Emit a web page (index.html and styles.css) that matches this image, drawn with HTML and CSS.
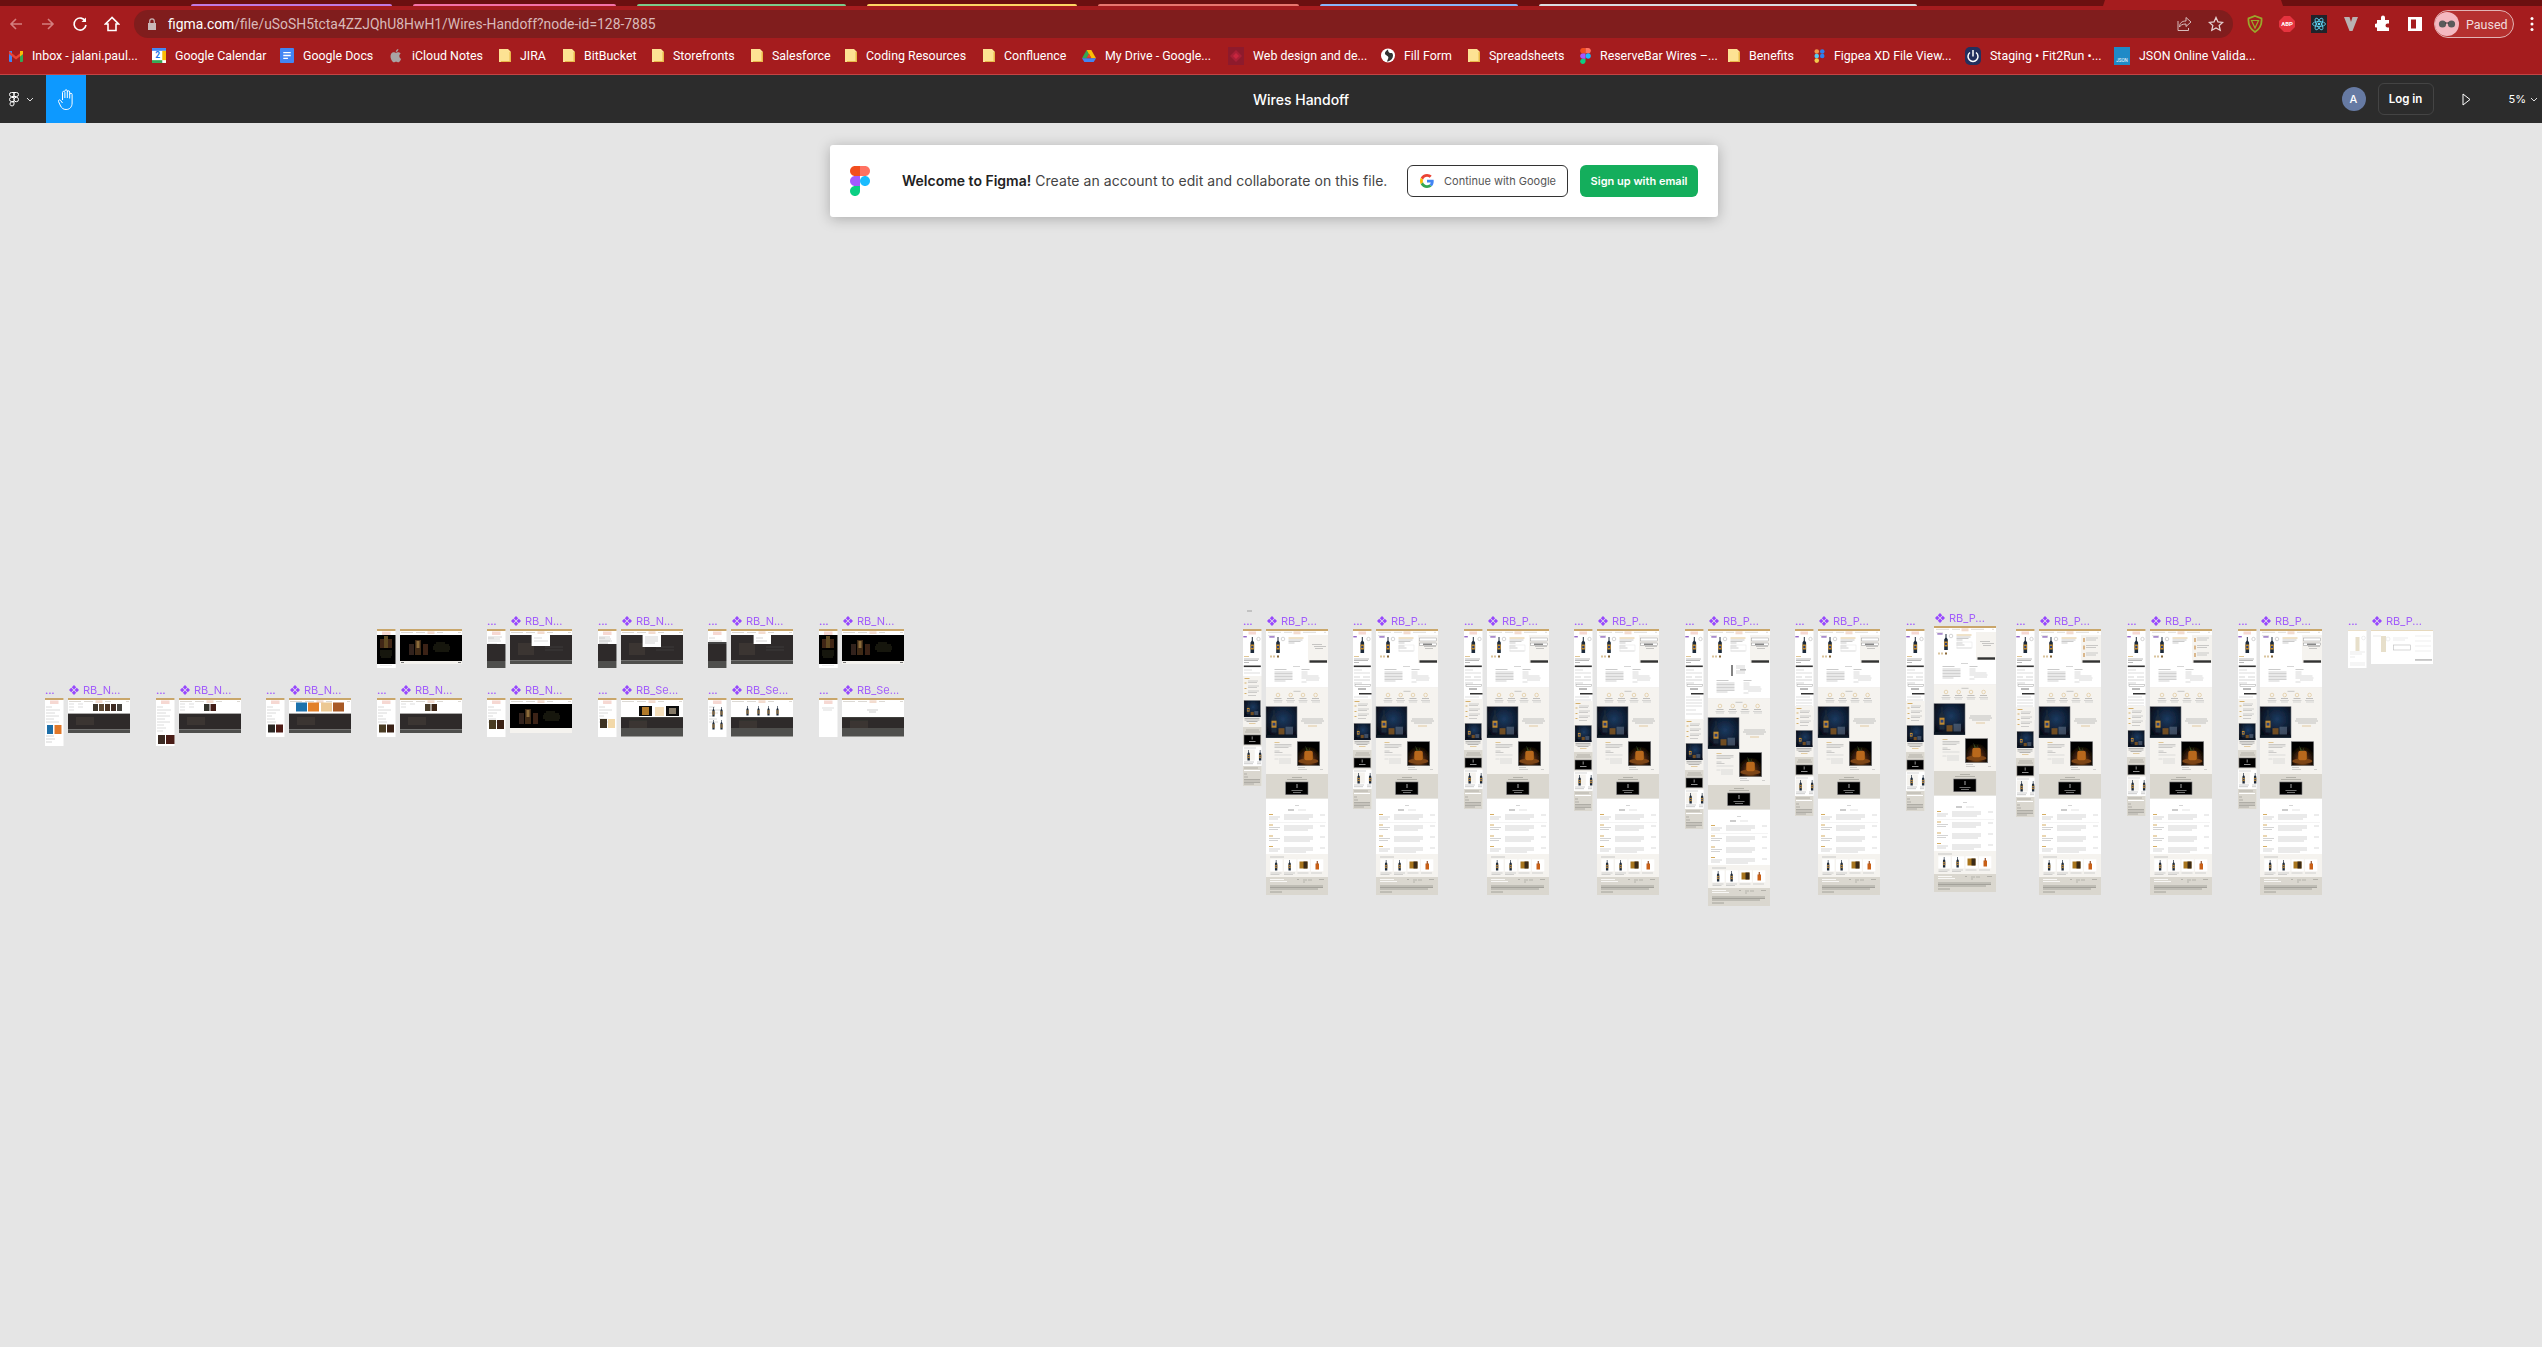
FILE: index.html
```html
<!DOCTYPE html>
<html lang="en">

<head>
    <meta charset="UTF-8">
    <meta name="viewport" content="width=device-width, initial-scale=1.0">
    <title>Wires Handoff - Figma</title>
    <link rel="stylesheet" href="styles.css">
</head>

<body>
    <!-- shared bits for the browser bar -->
    <svg class="sprites" width="0" height="0">
        <defs>
            <g id="folder">
                <path d="M0 0h9l3 3v10H0z" fill="#fde293" />
                <path d="M10.500 3H12v10H2v-1h8.500z" fill="#e9b949" />
            </g>
            <g id="figmaColor">
                <path d="M50 300c27.600 0 50-22.400 50-50v-50H50c-27.600 0-50 22.400-50 50s22.400 50 50 50z" fill="#0acf83" />
                <path d="M0 150c0-27.600 22.400-50 50-50h50v100H50c-27.600 0-50-22.400-50-50z" fill="#a259ff" />
                <path d="M0 50C0 22.400 22.400 0 50 0h50v100H50C22.400 100 0 77.600 0 50z" fill="#f24e1e" />
                <path d="M100 0h50c27.600 0 50 22.400 50 50s-22.400 50-50 50h-50V0z" fill="#ff7262" />
                <path d="M200 150c0 27.600-22.400 50-50 50s-50-22.400-50-50 22.400-50 50-50 50 22.400 50 50z" fill="#1abcfe" />
            </g>
        </defs>
    </svg>

    <div class="tabstrip">
        <span class="tabline t-purple"></span>
        <span class="tabline t-pink"></span>
        <span class="tabline t-green"></span>
        <span class="tabline t-yellow"></span>
        <span class="tabline t-salmon"></span>
        <span class="tabline t-blue"></span>
        <span class="tabline t-grey"></span>
        <span class="active-tab"></span>
    </div>

    <div class="toolbar">
        <div class="nav-btns">
            <svg class="nav-icon" viewBox="0 0 16 16"><path d="M14 8H3M8 3 3 8l5 5" class="dim-stroke" /></svg>
            <svg class="nav-icon" viewBox="0 0 16 16"><path d="M2 8h11M8 3l5 5-5 5" class="dim-stroke" /></svg>
            <svg class="nav-icon" viewBox="0 0 16 16"><path d="M13.500 5.500A6 6 0 1 0 14 9" class="white-stroke" /><path d="M14 1.500V6H9.500z" fill="#fff" /></svg>
            <svg class="nav-icon" viewBox="0 0 16 16"><path d="M8 1.500 1.500 8H4v6.500h8V8h2.500z" class="white-stroke" /></svg>
        </div>
        <div class="omnibox">
            <svg class="lock" viewBox="0 0 10 12"><path d="M1 5h8v7H1z" fill="#c9b7b7" /><path d="M2.700 5V3.200a2.300 2.300 0 0 1 4.600 0V5" fill="none" stroke="#c9b7b7" stroke-width="1.200" /></svg>
            <div class="url"><span class="host">figma.com</span>/file/uSoSH5tcta4ZZJQhU8HwH1/Wires-Handoff?node-id=128-7885</div>
            <svg class="omni-icon" viewBox="0 0 16 16"><path d="M10 1.500 15 6l-5 4.500V8C6.500 8 4.500 9 3.500 11c0-4 2.500-6 6.500-6zM2 5v9.500h10.500V12" fill="none" stroke="#d8bcbc" stroke-width="1" /></svg>
            <svg class="omni-icon" viewBox="0 0 16 16"><path d="m8 1.500 2 4.400 4.700.5-3.500 3.200 1 4.700L8 11.900l-4.200 2.400 1-4.700L1.300 6.400 6 5.900z" fill="none" stroke="#e4d2d2" stroke-width="1.300" /></svg>
        </div>
        <div class="extensions">
            <svg class="ext" viewBox="0 0 16 18"><path d="M8 1 14.500 3.500C15 9 13 14 8 17 3 14 1 9 1.500 3.500z" fill="none" stroke="#9aa82c" stroke-width="1.800" /><path d="M4.500 5.500h7L8 13z" fill="none" stroke="#9aa82c" stroke-width="1.200" /></svg>
            <svg class="ext" viewBox="0 0 16 18"><path d="M5 1h6l5 5v6l-5 5H5l-5-5V6z" fill="#e6333f" /><text x="8" y="11.200" class="abp">ABP</text></svg>
            <svg class="ext" viewBox="0 0 16 18"><path d="M0 0h16v18H0z" fill="#20232a" /><g fill="none" stroke="#61dafb" stroke-width=".8"><ellipse cx="8" cy="9" rx="6.500" ry="2.500" /><ellipse cx="8" cy="9" rx="6.500" ry="2.500" transform="rotate(60 8 9)" /><ellipse cx="8" cy="9" rx="6.500" ry="2.500" transform="rotate(120 8 9)" /></g><circle cx="8" cy="9" r="1.300" fill="#61dafb" /></svg>
            <svg class="ext" viewBox="0 0 16 16"><path d="M1 1h5.500L8 6l1.500-5H15L9.500 15h-3z" fill="#b9b2b2" /></svg>
            <svg class="ext" viewBox="0 0 16 16"><path d="M6 1.500a2 2 0 0 1 4 0V4h4v3.500h-1.500a2 2 0 0 0 0 4H14V15H2v-3.500h-.5a2 2 0 0 1 0-4H2V4h4z" fill="#fff" /></svg>
            <svg class="ext" viewBox="0 0 16 16"><path d="M1 1h14v14H1z" fill="#fff" /><path d="M4 3.500h5v9H4z" fill="#a51c1e" /></svg>
            <div class="profile">
                <svg class="avatar" viewBox="0 0 24 24">
                    <circle cx="12" cy="12" r="12" fill="#f4b8c0" />
                    <circle cx="7.500" cy="12" r="3.600" fill="#5b5b5b" />
                    <circle cx="16.500" cy="12" r="3.600" fill="#5b5b5b" />
                    <path d="M10 11h4" stroke="#333" />
                </svg>
                <span class="paused">Paused</span>
            </div>
            <svg class="kebab" viewBox="0 0 4 16"><circle cx="2" cy="2.500" r="1.500" /><circle cx="2" cy="8" r="1.500" /><circle cx="2" cy="13.500" r="1.500" /></svg>
        </div>
    </div>

    <div class="bookmarks">
        <a class="bm w-inbox"><svg class="bm-icon" viewBox="0 0 14 13"><path d="M0 2h3v11H1a1 1 0 0 1-1-1z" fill="#4285f4" /><path d="M11 2h3v10a1 1 0 0 1-1 1h-2z" fill="#34a853" /><path d="M0 2 7 7.500 14 2v3L7 10.500 0 5z" fill="#ea4335" /><path d="M11 2h3v3l-3 2.400z" fill="#fbbc05" /></svg>Inbox - jalani.paul...</a>
        <a class="bm w-cal"><svg class="bm-icon" viewBox="0 0 15 16"><path d="M0 0h15v16H0z" fill="#fff" /><path d="M0 0h15v3H0z" fill="#4285f4" /><path d="M0 13h11v3H0z" fill="#34a853" /><path d="M11 3h4v10h-4z" fill="#fbbc05" /><text x="6" y="11" class="cal-num">2</text></svg>Google Calendar</a>
        <a class="bm w-docs"><svg class="bm-icon" viewBox="0 0 15 16"><path d="M1 0h13a1 1 0 0 1 1 1v14a1 1 0 0 1-1 1H1a1 1 0 0 1-1-1V1a1 1 0 0 1 1-1z" fill="#4285f4" /><path d="M3.500 5h8M3.500 8h8M3.500 11h5" stroke="#fff" stroke-width="1.400" /></svg>Google Docs</a>
        <a class="bm w-icloud"><svg class="bm-icon" viewBox="0 0 14 16"><path d="M10.500 8.500c0-1.700 1.300-2.500 1.500-2.600-.8-1.200-2.100-1.400-2.500-1.400-1-.1-2 .6-2.600.6-.5 0-1.400-.6-2.300-.6C3.400 4.500 2.300 5.200 1.700 6.300.500 8.500 1.400 11.800 2.600 13.500c.6.800 1.300 1.800 2.200 1.700.9 0 1.200-.6 2.300-.6s1.400.6 2.300.6 1.600-.8 2.100-1.700c.7-1 1-1.900 1-2-.1 0-2-.7-2-3zM8.800 3.200c.5-.6.800-1.400.7-2.200-.7 0-1.500.5-2 1.100-.4.500-.8 1.300-.7 2.100.8 0 1.500-.4 2-1z" fill="#a9a4a4" /></svg>iCloud Notes</a>
        <a class="bm w-jira"><svg class="bm-icon fold" viewBox="0 0 12 13"><use href="#folder" /></svg>JIRA</a>
        <a class="bm w-bit"><svg class="bm-icon fold" viewBox="0 0 12 13"><use href="#folder" /></svg>BitBucket</a>
        <a class="bm w-store"><svg class="bm-icon fold" viewBox="0 0 12 13"><use href="#folder" /></svg>Storefronts</a>
        <a class="bm w-sales"><svg class="bm-icon fold" viewBox="0 0 12 13"><use href="#folder" /></svg>Salesforce</a>
        <a class="bm w-coding"><svg class="bm-icon fold" viewBox="0 0 12 13"><use href="#folder" /></svg>Coding Resources</a>
        <a class="bm w-conf"><svg class="bm-icon fold" viewBox="0 0 12 13"><use href="#folder" /></svg>Confluence</a>
        <a class="bm w-drive"><svg class="bm-icon" viewBox="0 0 15 14"><path d="M5 0h5L5 9H0z" fill="#34a853" transform="translate(0 1)" /><path d="M5 0h5l5 9h-5z" fill="#fbbc05" transform="translate(0 1)" /><path d="M0 10h15l-2.500 4h-10z" fill="#4285f4" /><path d="M7.500 5 10 9.500H5z" fill="#ea4335" /></svg>My Drive - Google...</a>
        <a class="bm w-web"><svg class="bm-icon tall" viewBox="0 0 16 18"><path d="M0 0h16v18H0z" fill="#8e1a2c" /><path d="M8 3l6 6-6 6-6-6z" fill="#a81f36" /><path d="M8 6l3 3-3 3-3-3z" fill="#c8263f" /></svg>Web design and de...</a>
        <a class="bm w-fill"><svg class="bm-icon" viewBox="0 0 14 14"><circle cx="7" cy="7" r="7" fill="#fff" /><path d="M7 1C4 3 3 5 5 6.500S8 8 7 10.500 5.500 13 7 13c3-1 5-3 5-6 0-1-.5-2-1-2.500C9 5 7 4 7 1z" fill="#333" /></svg>Fill Form</a>
        <a class="bm w-sheets"><svg class="bm-icon fold" viewBox="0 0 12 13"><use href="#folder" /></svg>Spreadsheets</a>
        <a class="bm w-rb"><svg class="bm-icon narrow" viewBox="0 0 200 300"><use href="#figmaColor" /></svg>ReserveBar Wires –...</a>
        <a class="bm w-ben"><svg class="bm-icon fold" viewBox="0 0 12 13"><use href="#folder" /></svg>Benefits</a>
        <a class="bm w-figpea"><svg class="bm-icon narrow" viewBox="0 0 12 16"><circle cx="3" cy="3" r="2.500" fill="#f2994a" /><circle cx="9" cy="3" r="2.500" fill="#2f80ed" /><circle cx="3" cy="8" r="2.500" fill="#56ccf2" /><circle cx="9" cy="8" r="2.500" fill="#2f80ed" /><circle cx="3" cy="13" r="2.500" fill="#f2c94c" /></svg>Figpea XD File View...</a>
        <a class="bm w-staging"><svg class="bm-icon tall" viewBox="0 0 16 18"><rect width="16" height="18" rx="5" fill="#23305e" /><path d="M5 5.500a5 5 0 1 0 6 0" fill="none" stroke="#fff" stroke-width="1.500" /><path d="M8 3v6.500" stroke="#fff" stroke-width="1.500" /></svg>Staging • Fit2Run •...</a>
        <a class="bm w-json"><svg class="bm-icon tall" viewBox="0 0 16 18"><path d="M0 0h16v18H0z" fill="#1f8ac7" /><text x="8" y="15" class="json-mark">JSON</text></svg>JSON Online Valida...</a>
    </div>

    <div class="figma-bar">
        <div class="bar-left">
            <svg class="menu-logo" viewBox="0 0 200 300" fill="none" stroke="#fff" stroke-width="20">
                <path d="M100 10H50a40 40 0 0 0 0 80h50zM100 10h50a40 40 0 0 1 0 80h-50zM100 110H50a40 40 0 0 0 0 80h50zM100 200H50a40 40 0 1 0 50 40zM190 150a40 40 0 1 1-90 0 40 40 0 0 1 90 0z" />
            </svg>
            <svg class="chev" viewBox="0 0 8 5"><path d="M1 1l3 3 3-3" /></svg>
            <div class="hand-btn">
                <svg class="hand" viewBox="0 0 18 21"><path d="M5.500 11V3.500a1.200 1.200 0 0 1 2.400 0V9m0-7a1.200 1.200 0 0 1 2.400 0v7m0-6a1.200 1.200 0 0 1 2.400 0v6.500m0-4a1.200 1.200 0 0 1 2.400 0V14c0 4-2.500 6.500-6 6.500-3 0-4.300-1.500-5.500-3.500L1.500 12.500c-.6-1.200 1.100-2.300 2-1.200L5.500 14" /></svg>
            </div>
        </div>
        <div class="doc-title">Wires Handoff</div>
        <div class="bar-right">
            <div class="user-dot">A</div>
            <div class="login-btn">Log in</div>
            <svg class="play" viewBox="0 0 9 13"><path d="M1 1l7 5.500L1 12z" /></svg>
            <div class="zoom-level">5%</div>
            <svg class="chev" viewBox="0 0 8 5"><path d="M1 1l3 3 3-3" /></svg>
        </div>
    </div>

    <div class="canvas">
        <!-- the file's frames, at 5% zoom, in page coordinates -->
        <svg class="board" viewBox="0 123 2542 1224" width="2542" height="1224">
            <defs>
                <filter id="soft" x="-5%" y="-5%" width="110%" height="110%">
                    <feGaussianBlur stdDeviation=".3" />
                </filter>
                <filter id="softer" x="-5%" y="-5%" width="110%" height="110%">
                    <feGaussianBlur stdDeviation=".2" />
                </filter>
                <radialGradient id="navyGlow" cx="55%" cy="40%" r="65%">
                    <stop offset="0" stop-color="#1c3a60" />
                    <stop offset="1" stop-color="#050b16" />
                </radialGradient>
                <radialGradient id="amberGlow" cx="50%" cy="75%" r="55%">
                    <stop offset="0" stop-color="#a9601a" />
                    <stop offset=".55" stop-color="#3d200b" />
                    <stop offset="1" stop-color="#050302" />
                </radialGradient>

                <path id="comp" d="M5 0l2.200 2.200L5 4.400 2.800 2.200zM2.200 2.800l2.200 2.200-2.200 2.200L0 5zM7.800 2.800 10 5 7.800 7.200 5.600 5zM5 5.600l2.200 2.200L5 10 2.800 7.800z" fill="#9747ff" />

                <g id="bottle">
                    <path d="M2 0h1v3.500l1.300 2V16H.7V5.500L2 3.500z" fill="#1d2a3a" />
                    <path d="M.7 7.500h3.600v5H.7z" fill="#c08a30" />
                    <path d="M1.500 9h2v2h-2z" fill="#2b3f78" />
                </g>
                <g id="navyShot">
                    <rect width="31" height="31" fill="url(#navyGlow)" stroke="#77787c" stroke-width=".6" />
                    <use href="#bottle" transform="translate(4.500 3.500) scale(1.400)" />
                    <path d="M12.500 21.500h6v6.500h-6z" fill="#8a5a20" opacity=".8" />
                    <path d="M19.500 20h7.500v8h-7.500z" fill="#7f8fa3" opacity=".45" />
                    <path d="M0 28h31v3H0z" fill="#0a1524" />
                </g>
                <g id="amberShot">
                    <rect width="22.400" height="24" fill="url(#amberGlow)" stroke="#77787c" stroke-width=".6" />
                    <ellipse cx="11" cy="19.500" rx="10" ry="2.600" fill="#7d4516" />
                    <rect x="7" y="9" width="8.500" height="9.500" rx="2" fill="#b8681c" />
                    <path d="M8 4l3 5 2-4-1 4H9z" fill="#34491f" />
                </g>

                <!-- product page, desktop -->
                <g id="deskHead">
                    <rect width="62" height="37" fill="#fff" />
                    <rect width="62" height="2" fill="#c9a66b" />
                    <path d="M2 3.300h13M18 3.300h8M37 3.300h13M58 3.300h2" stroke="#bdb8ae" stroke-width=".5" />
                    <rect x="27.500" y="2.300" width="7" height="3" fill="#f3dccf" />
                    <path d="M2 6.600h7" stroke="#c8c8c8" stroke-width=".5" />
                    <rect x="3.300" y="7.500" width="5.300" height=".9" fill="#54199c" />
                    <use href="#bottle" x="9.500" y="8" />
                    <circle cx="17" cy="10" r="1.800" fill="none" stroke="#aaa" stroke-width=".5" />
                    <path d="M22.500 9h15" stroke="#d8b878" stroke-width=".8" />
                    <path d="M22.500 11h14M22.500 12.500h12M22.500 14h6" stroke="#8a8a8a" stroke-width=".45" />
                    <path d="M5 26.500v2M8 26.500v2" stroke="#b58a3c" stroke-width="1" />
                    <path d="M11 27.500h2" stroke="#8a6a3a" stroke-width="2" />
                    <rect x="42" y="6" width="20" height="28" fill="#f5f3ef" />
                    <path d="M46 15.500h10M48 17.500h12M49 19.500h8" stroke="#8c8c8c" stroke-width=".45" />
                    <rect x="43.500" y="31.300" width="17.500" height="2.400" fill="#333" />
                </g>
                <g id="deskBody">
                    <rect y="37" width="62" height="21.400" fill="#fff" />
                    <path d="M27 37.500h7" stroke="#aaa" stroke-width=".5" />
                    <path d="M8.500 40.500h12M35.500 40.500h8" stroke="#888" stroke-width=".45" />
                    <path d="M8.500 43h18M8.500 44.500h18M8.500 46h18M8.500 47.500h18M8.500 49h18M8.500 50.500h18M8.500 52h11" stroke="#a3a3a3" stroke-width=".5" />
                    <path d="M35.500 43h6M35.500 45h6M35.500 47h17M35.500 49h18M40 51h13M35.500 53h5" stroke="#b0b0b0" stroke-width=".5" />
                    <rect y="58.300" width="62" height="86.800" fill="#f5f3ef" />
                    <path d="M27.500 62.300h7" stroke="#999" stroke-width=".5" />
                    <g fill="none" stroke="#dcc08c" stroke-width=".6">
                        <circle cx="12" cy="66" r="1.800" />
                        <circle cx="24.700" cy="66" r="1.800" />
                        <circle cx="37" cy="66" r="1.800" />
                        <circle cx="49.600" cy="66" r="1.800" />
                    </g>
                    <path d="M8.500 69.500h7M21 69.500h7M33.500 69.500h7M46 69.500h7" stroke="#888" stroke-width=".5" />
                    <path d="M7.500 71.500h9M20 71.500h9M32.500 71.500h9M45 71.500h9M8 73h8M21 73h7M33 73h8M46 73h8" stroke="#b4b4b4" stroke-width=".5" />
                    <use href="#navyShot" y="77.700" />
                    <path d="M36 90h21M35 92h23M38 94h18" stroke="#8f8f8f" stroke-width=".5" />
                    <path d="M42 97h9" stroke="#d5b06c" stroke-width=".6" />
                    <path d="M8.500 113.500h5" stroke="#d5b06c" stroke-width=".7" />
                    <path d="M8.500 115.500h17M8.500 117h17M8.500 118.500h14M8.500 122h5M8.500 123.500h8" stroke="#a3a3a3" stroke-width=".5" />
                    <path d="M8.500 126h17M8.500 130h4M13 130h12M13 132h12M13 134h12" stroke="#c0c0c0" stroke-width=".5" />
                    <use href="#amberShot" x="31.300" y="112.700" />
                    <path d="M32 138.500h7M32 140.500h9M54 140.500h3" stroke="#aaa" stroke-width=".5" />
                    <rect y="145" width="62" height="24.500" fill="#dad7cf" />
                    <path d="M26 148.500h10M21 150.500h20" stroke="#8c8a82" stroke-width=".5" />
                    <rect x="19.700" y="153" width="22.300" height="12.700" fill="#050505" stroke="#77767a" stroke-width=".6" />
                    <path d="M31 155v4" stroke="#c8c8c8" stroke-width=".8" />
                    <path d="M25.500 161.500h11M27 163.500h8" stroke="#d8d8d8" stroke-width=".5" />
                    <rect y="169.800" width="62" height="55.200" fill="#fff" />
                    <path d="M29 176.500h4" stroke="#aaa" stroke-width=".5" />
                    <path d="M22 181h6" stroke="#555" stroke-width=".6" />
                    <path d="M32 181h8" stroke="#ccc" stroke-width=".6" />
                    <path d="M3 185.500h4M3 196h4M3 207h4M3 217.500h4" stroke="#d5ad62" stroke-width="1" />
                    <path d="M3 188h11M3 190h9M3 198.500h11M3 200.500h9M3 209.500h11M3 211.500h9M3 220h11M3 222h9" stroke="#a8a8a8" stroke-width=".5" />
                    <path d="M18 186h29M18 188h29M18 190h25M18 197h29M18 199h29M18 201h24M18 208h29M18 210h29M18 212h26M18 219h29M18 221h29M18 223h22" stroke="#a8a8a8" stroke-width=".5" />
                    <path d="M54 186h5M54 197h5M54 208h5M54 219h5" stroke="#b0b0b0" stroke-width=".5" />
                    <path d="M3 193.500h57" stroke="#e9e9e9" stroke-width=".5" />
                    <rect y="225" width="62" height="23" fill="#f5f3ef" />
                    <path d="M4 228h14" stroke="#999" stroke-width=".5" />
                    <rect x="4.300" y="230.300" width="12.300" height="12" fill="#fff" />
                    <rect x="18" y="230.300" width="12.300" height="12" fill="#fff" />
                    <rect x="31.500" y="230.300" width="12.300" height="12" fill="#fff" />
                    <rect x="45" y="230.300" width="12.300" height="12" fill="#fff" />
                    <use href="#bottle" transform="translate(8.500 231) scale(.65)" />
                    <use href="#bottle" transform="translate(22 231) scale(.65)" />
                    <path d="M33.500 232.500h8v7h-8z" fill="#a9751e" />
                    <path d="M37.500 232.500h4v7h-4z" fill="#3a2a14" />
                    <path d="M49.500 234.500h3.500v6h-3.500z" fill="#c85f17" />
                    <path d="M50.700 232h1.100v3h-1.100z" fill="#8a3d10" />
                    <path d="M4.500 244h11M4.500 245.500h9M18 244h11M18 245.500h9M31.500 244h11M45 244h11" stroke="#aaa" stroke-width=".5" />
                    <rect y="248" width="62" height="18" fill="#dad7cf" />
                    <path d="M4 250.500h14M4 252.500h17" stroke="#fff" stroke-width=".8" />
                    <path d="M31 250.500h2M37 251h4M37 253h2M42 251h4M53 250.500h5" stroke="#8f8d86" stroke-width=".5" />
                    <path d="M4 257h53M4 258.500h53M4 260h48M4 263h12" stroke="#77756f" stroke-width=".55" />
                </g>
                <g id="panelForm">
                    <rect x="43.500" y="9" width="17" height="3" fill="#fff" stroke="#888" stroke-width=".4" />
                    <rect x="43.500" y="14" width="17" height="2.500" fill="#fff" stroke="#777" stroke-width=".4" />
                    <rect x="47" y="14.500" width="9" height="1.500" fill="#888" />
                </g>
                <g id="panelRows">
                    <rect x="42" y="6" width="20" height="24" fill="#f5f3ef" />
                    <path d="M45 9v4M45 16.500v4M45 24v4" stroke="#c8904a" stroke-width="1.200" />
                    <path d="M47 9h12M47 11h10M47 16.500h12M47 18.500h10M47 24h12M47 26h10" stroke="#9c9c9c" stroke-width=".5" />
                </g>
                <g id="qtyRow">
                    <path d="M22.500 17h6M22.500 19h8" stroke="#999" stroke-width=".5" />
                    <path d="M22.500 22h15" stroke="#cfcfcf" stroke-width=".6" />
                    <rect x="23" y="16" width="15" height="6" fill="none" stroke="#ddd" stroke-width=".4" />
                </g>
                <g id="deskExtra">
                    <rect y="37" width="62" height="12" fill="#fff" />
                    <path d="M24 36v11" stroke="#666" stroke-width="1.600" />
                    <path d="M28 37h9M28 39h9M28 42h9M28 44h9" stroke="#aaa" stroke-width=".5" />
                    <rect x="32" y="40" width="6" height="1.500" fill="#bbb" />
                </g>

                <!-- product page, mobile -->
                <g id="mobHead">
                    <rect width="18.500" height="47" fill="#fff" />
                    <rect width="18.500" height="2" fill="#c9a66b" />
                    <rect x="5.500" y="2.500" width="7.500" height="3" fill="#f6d8d2" />
                    <rect x=".3" y="7.300" width="3.500" height="1" fill="#6a28b0" />
                    <use href="#bottle" x="6.800" y="8" />
                    <circle cx="15.500" cy="10" r="1.700" fill="none" stroke="#aaa" stroke-width=".5" />
                    <path d="M1 27.500h5" stroke="#d8b878" stroke-width=".8" />
                    <path d="M1 30h15M1 31.500h14M1 33.500h5" stroke="#777" stroke-width=".5" />
                    <rect x=".8" y="36.500" width="17" height="1.600" fill="#333" />
                    <path d="M1 41h8M1 44h16" stroke="#bbb" stroke-width=".5" />
                </g>
                <g id="mobExtra">
                    <rect width="18.500" height="44" fill="#fff" />
                    <path d="M1 1h6M10 1h7M1 4h16M1 7h8" stroke="#aaa" stroke-width=".5" />
                    <rect x="2" y="8.500" width="15.500" height="2" fill="#fff" stroke="#888" stroke-width=".4" />
                    <rect x="5" y="12.500" width="8" height="1" fill="#777" />
                    <rect x="6" y="17" width="12.500" height="1.500" fill="#333" />
                    <path d="M1 21h14M1 24h16M1 27h16M1 30h16M1 34h10M1 38h16" stroke="#bbb" stroke-width=".5" />
                </g>
                <g id="mobBody">
                    <rect y="47" width="18.500" height="110" fill="#f5f3ef" />
                    <path d="M1.500 49.500h5M1.500 54h2M1.500 59.500h2M1.500 64.500h2" stroke="#d5b06c" stroke-width="1" />
                    <path d="M5 52h10M5 53.500h9M5 57h11M5 58.500h9M5 62h11M5 63.500h9M5 66.500h8" stroke="#a5a5a5" stroke-width=".5" />
                    <g transform="translate(1 71.500) scale(.53)">
                        <use href="#navyShot" />
                    </g>
                    <path d="M1.500 89.500h15M1.500 91h15M3.500 92.500h11" stroke="#777" stroke-width=".5" />
                    <path d="M6 94.500h6.500" stroke="#d5b06c" stroke-width=".6" />
                    <rect y="98" width="18.500" height="18.500" fill="#dad7cf" />
                    <path d="M3 101h13M2 103h15" stroke="#8c8a82" stroke-width=".5" />
                    <rect x="1" y="106" width="16.500" height="9.500" fill="#050505" stroke="#77767a" stroke-width=".5" />
                    <path d="M9.200 107.500v3M6 112.500h6.500" stroke="#ccc" stroke-width=".7" />
                    <rect y="117.800" width="18.500" height="19" fill="#fff" />
                    <path d="M1 119h12" stroke="#aaa" stroke-width=".5" />
                    <rect x=".8" y="120.500" width="11" height="11" fill="#f5f3ef" />
                    <use href="#bottle" transform="translate(4 121) scale(.65)" />
                    <use href="#bottle" transform="translate(15.500 121) scale(.65)" />
                    <path d="M1 133h10M1 134.700h9M14 133h4M14 134.700h4" stroke="#999" stroke-width=".5" />
                    <rect y="137" width="18.500" height="20" fill="#dad7cf" />
                    <path d="M1 139h14" stroke="#8c8a82" stroke-width=".5" />
                    <path d="M1 141.500h16" stroke="#fff" stroke-width="1" />
                    <path d="M1 145h3M1 148h4M1 150.500h16M1 152h16M1 153.500h16M1 155h10" stroke="#85837c" stroke-width=".5" />
                </g>

                <!-- small variant at the far right -->
                <g id="cardDesk">
                    <rect width="62" height="34" fill="#fff" />
                    <rect width="62" height="1" fill="#e6d9bd" />
                    <rect x="10" y="6" width="5" height="16" fill="#e7dfca" />
                    <circle cx="17" cy="9" r="2" fill="none" stroke="#ddd" stroke-width=".5" />
                    <path d="M22 8h15M22 10h12M2 6h8" stroke="#ddd" stroke-width=".6" />
                    <rect x="22.500" y="15" width="17" height="5" fill="none" stroke="#bbb" stroke-width=".6" />
                    <path d="M44 6h16M44 11h16M44 16h16M44 21h16" stroke="#e4e4e4" stroke-width=".6" />
                    <rect x="44" y="29" width="17" height="1.800" fill="#c4c4c4" />
                </g>
                <g id="cardMob">
                    <rect width="18.500" height="38" fill="#fff" />
                    <rect width="18.500" height=".8" fill="#e6d9bd" />
                    <rect x="7.500" y="7" width="4" height="14" fill="#e7dfca" />
                    <circle cx="15.500" cy="8" r="1.800" fill="none" stroke="#ddd" stroke-width=".5" />
                    <path d="M2 22h15M2 24h12M2 27h5M2 33h15M2 35h15" stroke="#ddd" stroke-width=".6" />
                </g>

                <!-- nav and search frames -->
                <g id="navDesk">
                    <rect width="62" height="35" fill="#fff" />
                    <rect width="62" height="2" fill="#c9a66b" />
                    <path d="M1 3.500h12M16 3.500h9M37 3.500h6M58 3.500h3" stroke="#b8b3a8" stroke-width=".5" />
                    <rect x="27.500" y="2.300" width="7" height="2.700" fill="#f3dccf" />
                </g>
                <g id="dimBelow">
                    <rect y="15.600" width="62" height="15.700" fill="#2d2c2a" />
                    <path d="M8 19h18v8H8z" fill="#3a3631" />
                    <rect y="31.300" width="62" height="3.700" fill="#50504d" />
                </g>
                <g id="dimFull">
                    <rect y="6" width="62" height="25.300" fill="#2d2c2a" />
                    <path d="M8 14h16v12H8z" fill="#3a3631" />
                    <path d="M35 18h18M35 21h18" stroke="#3f3d3a" stroke-width=".8" />
                    <rect y="31.300" width="62" height="3.700" fill="#50504d" />
                </g>
                <g id="heroBlack">
                    <rect y="6" width="62" height="26" fill="#040302" />
                    <path d="M9 15h5v11H9z" fill="#33201a" />
                    <path d="M15 11h6v15h-6z" fill="#3f2c18" />
                    <path d="M16.500 12h3v7h-3z" fill="#8c6c3a" />
                    <path d="M23 15h5v11h-5z" fill="#3a2218" />
                    <path d="M36 14h9M34 16h15M33 18h17M33 20h17M35 22h14" stroke="#5a4e3e" stroke-width=".5" />
                    <rect y="32" width="62" height="3" fill="#f5f3ef" />
                    <path d="M1 33.500h3M58 33.500h3" stroke="#777" stroke-width="1" />
                </g>
                <g id="navMob">
                    <rect width="18.500" height="39" fill="#fff" />
                    <rect width="18.500" height="2" fill="#c9a66b" />
                    <rect x="5" y="2.500" width="8.500" height="3.500" fill="#f6d8d2" />
                    <path d="M1 9h6M1 12h13M1 15h9M1 18h5M1 21h8M1 24h9" stroke="#bdbdbd" stroke-width=".55" />
                </g>
                <g id="navMobTall">
                    <rect width="18.500" height="48" fill="#fff" />
                    <rect width="18.500" height="2" fill="#c9a66b" />
                    <rect x="5" y="2.500" width="8.500" height="3.500" fill="#f6d8d2" />
                    <path d="M1 9h6M1 12h14M1 15h9M1 18h13M1 21h8M1 24h13" stroke="#bdbdbd" stroke-width=".55" />
                </g>
                <g id="navMobHero">
                    <use href="#navMob" />
                    <rect y="6" width="18.500" height="29" fill="#040302" />
                    <path d="M3 10h4v9H3zM11 10h4v9h-4z" fill="#3f2618" />
                    <path d="M7 7h4v12H7z" fill="#5f4822" />
                    <path d="M3 22h12M3 24h12M3 26h12M4 28h10" stroke="#55493a" stroke-width=".5" />
                    <rect y="35" width="18.500" height="4" fill="#fff" />
                    <path d="M3 36.500h12" stroke="#ddd" stroke-width=".6" />
                </g>
                <g id="navMobDim">
                    <use href="#navMob" />
                    <rect y="15" width="18.500" height="17" fill="#2d2c2a" />
                    <rect y="32" width="18.500" height="7" fill="#50504d" />
                </g>
            </defs>

            <!-- tiny hidden-layer marker above the first product frame -->
            <path d="M1247 611h5" stroke="#a0a0a0" stroke-width="1" />

            <!-- nav frames, top row -->
            <g transform="translate(377 629)">
                <use href="#navMobHero" filter="url(#soft)" />
                <g transform="translate(23 0)" filter="url(#soft)"><use href="#navDesk" /><use href="#heroBlack" /></g>
            </g>
            <g transform="translate(487 629)">
                <text class="dots" y="-4">...</text><use href="#comp" x="24" y="-13" /><text class="name" x="38" y="-4">RB_N...</text>
                <g filter="url(#soft)"><use href="#navMobDim" /><path d="M1 8h14M1 10h12" stroke="#aaa" stroke-width=".5" /></g>
                <g transform="translate(23 0)" filter="url(#soft)"><use href="#navDesk" /><use href="#dimFull" /><rect x="21.600" y="6" width="18.400" height="11" fill="#fff" /><path d="M24 9h8M24 12h14" stroke="#bbb" stroke-width=".5" /></g>
            </g>
            <g transform="translate(598 629)">
                <text class="dots" y="-4">...</text><use href="#comp" x="24" y="-13" /><text class="name" x="38" y="-4">RB_N...</text>
                <g filter="url(#soft)"><use href="#navMobDim" /><path d="M1 8h11M1 10h12M1 12h11M1 14h9" stroke="#aaa" stroke-width=".5" /></g>
                <g transform="translate(23 0)" filter="url(#soft)"><use href="#navDesk" /><use href="#dimFull" /><rect x="21.600" y="6" width="18.400" height="12" fill="#fff" /><path d="M24 8h13M24 10h13M24 12h13M24 14h10" stroke="#aaa" stroke-width=".5" /></g>
            </g>
            <g transform="translate(708 629)">
                <text class="dots" y="-4">...</text><use href="#comp" x="24" y="-13" /><text class="name" x="38" y="-4">RB_N...</text>
                <g filter="url(#soft)"><use href="#navMobDim" /><rect y="13" width="18.500" height="2" fill="#444" /></g>
                <g transform="translate(23 0)" filter="url(#soft)"><use href="#navDesk" /><use href="#dimFull" /><rect x="22.600" y="6" width="17.400" height="9" fill="#fff" /><path d="M25 9h7M25 12h11" stroke="#aaa" stroke-width=".5" /></g>
            </g>
            <g transform="translate(819 629)">
                <text class="dots" y="-4">...</text><use href="#comp" x="24" y="-13" /><text class="name" x="38" y="-4">RB_N...</text>
                <use href="#navMobHero" filter="url(#soft)" />
                <g transform="translate(23 0)" filter="url(#soft)"><use href="#navDesk" /><use href="#heroBlack" /></g>
            </g>

            <!-- nav frames, bottom row -->
            <g transform="translate(45 698)">
                <text class="dots" y="-4">...</text><use href="#comp" x="24" y="-13" /><text class="name" x="38" y="-4">RB_N...</text>
                <g filter="url(#soft)"><use href="#navMobTall" /><path d="M2 27h6v9H2z" fill="#1f6ea8" /><path d="M9.500 27h7v9h-7z" fill="#e0782a" /><path d="M1 38h8M1 41h9M1 44h6" stroke="#aaa" stroke-width=".5" /></g>
                <g transform="translate(23 0)" filter="url(#soft)"><use href="#navDesk" /><use href="#dimBelow" /><path d="M1 6h5M10 6h5M1 9h5M10 9h5M1 12h5" stroke="#bbb" stroke-width=".5" /><path d="M25 6h5v7h-5z" fill="#3c342c" /><path d="M31 6h5v7h-5z" fill="#5c4630" /><path d="M37 6h5v7h-5z" fill="#4a3220" /><path d="M43 6h5v7h-5z" fill="#3c2a22" /><path d="M49 6h5v7h-5z" fill="#45423e" /></g>
            </g>
            <g transform="translate(156 698)">
                <text class="dots" y="-4">...</text><use href="#comp" x="24" y="-13" /><text class="name" x="38" y="-4">RB_N...</text>
                <g filter="url(#soft)"><use href="#navMobTall" /><path d="M1 27h7M1 30h9M1 33h6" stroke="#bbb" stroke-width=".5" /><path d="M2 37h7v9H2z" fill="#3a2a20" /><path d="M10 37h8.500v9H10z" fill="#4a1c16" /></g>
                <g transform="translate(23 0)" filter="url(#soft)"><use href="#navDesk" /><use href="#dimBelow" /><path d="M1 6h5M10 6h5M1 9h5M10 9h5M1 12h5" stroke="#bbb" stroke-width=".5" /><path d="M25 6h5.500v7H25z" fill="#33302c" /><path d="M31.500 6h5.500v7h-5.500z" fill="#421a16" /></g>
            </g>
            <g transform="translate(266 698)">
                <text class="dots" y="-4">...</text><use href="#comp" x="24" y="-13" /><text class="name" x="38" y="-4">RB_N...</text>
                <g filter="url(#soft)"><use href="#navMob" /><path d="M2 26.500h7v8H2z" fill="#2b2722" /><path d="M10 26.500h7v8h-7z" fill="#501c18" /></g>
                <g transform="translate(23 0)" filter="url(#soft)"><use href="#navDesk" /><use href="#dimBelow" /><path d="M7 4.500h11v9H7z" fill="#1f72ac" /><path d="M19 4.500h11v9H19z" fill="#e2812c" /><path d="M32 4.500h11v9H32z" fill="#ecc893" /><path d="M44 4.500h11v9H44z" fill="#a85a28" /></g>
            </g>
            <g transform="translate(377 698)">
                <text class="dots" y="-4">...</text><use href="#comp" x="24" y="-13" /><text class="name" x="38" y="-4">RB_N...</text>
                <g filter="url(#soft)"><use href="#navMob" /><path d="M2 26.500h7v8H2z" fill="#4a3a24" /><path d="M10 26.500h7v8h-7z" fill="#3a2418" /></g>
                <g transform="translate(23 0)" filter="url(#soft)"><use href="#navDesk" /><use href="#dimBelow" /><path d="M1 6h5M10 6h5M1 9h5" stroke="#bbb" stroke-width=".5" /><path d="M25 6h5.500v7H25z" fill="#4a3c2a" /><path d="M31.500 6h5.500v7h-5.500z" fill="#3c2818" /></g>
            </g>
            <g transform="translate(487 698)">
                <text class="dots" y="-4">...</text><use href="#comp" x="24" y="-13" /><text class="name" x="38" y="-4">RB_N...</text>
                <g filter="url(#soft)"><use href="#navMob" /><path d="M2 22h7v9H2z" fill="#4a3a24" /><path d="M10 22h7v9h-7z" fill="#3a2418" /></g>
                <g transform="translate(23 0)" filter="url(#soft)"><use href="#navDesk" /><use href="#heroBlack" /><rect y="30" width="62" height="5" fill="#f5f3ef" /></g>
            </g>
            <g transform="translate(598 698)">
                <text class="dots" y="-4">...</text><use href="#comp" x="24" y="-13" /><text class="name" x="38" y="-4">RB_Se...</text>
                <g filter="url(#soft)"><use href="#navMob" /><path d="M2 21h7v9H2z" fill="#3c3024" /><path d="M10 21h7v9h-7z" fill="#f2d8a8" /></g>
                <g transform="translate(23 0)" filter="url(#soft)"><use href="#navDesk" /><use href="#dimBelow" transform="translate(0 3.500)" /><rect y="30" width="62" height="5" fill="#50504d" /><path d="M18 8h13v10H18z" fill="#0b0a08" /><path d="M21 9h7v8h-7z" fill="#b27a2a" /><path d="M34 9h9v9h-9z" fill="#f5dfbb" /><path d="M45 8h13v10H45z" fill="#0b0a08" /><path d="M48 10h7v6h-7z" fill="#857a68" /></g>
            </g>
            <g transform="translate(708 698)">
                <text class="dots" y="-4">...</text><use href="#comp" x="24" y="-13" /><text class="name" x="38" y="-4">RB_Se...</text>
                <g filter="url(#soft)"><use href="#navMob" /><use href="#bottle" transform="translate(4 9) scale(.6)" /><use href="#bottle" transform="translate(12 9) scale(.6)" /><use href="#bottle" transform="translate(4 22) scale(.6)" /><use href="#bottle" transform="translate(12 22) scale(.6)" /></g>
                <g transform="translate(23 0)" filter="url(#soft)"><use href="#navDesk" /><use href="#dimBelow" transform="translate(0 3.500)" /><rect y="30" width="62" height="5" fill="#50504d" /><use href="#bottle" transform="translate(15 8) scale(.6)" /><use href="#bottle" transform="translate(26 8) scale(.6)" /><use href="#bottle" transform="translate(36 8) scale(.6)" /><use href="#bottle" transform="translate(45 8) scale(.6)" /></g>
            </g>
            <g transform="translate(819 698)">
                <text class="dots" y="-4">...</text><use href="#comp" x="24" y="-13" /><text class="name" x="38" y="-4">RB_Se...</text>
                <g filter="url(#soft)"><rect width="18.500" height="39" fill="#fff" /><rect width="18.500" height="2" fill="#c9a66b" /><rect x="5" y="2.500" width="8.500" height="3.500" fill="#f6d8d2" /><path d="M3 10h12M4 12h9" stroke="#bbb" stroke-width=".5" /></g>
                <g transform="translate(23 0)" filter="url(#soft)"><use href="#navDesk" /><use href="#dimBelow" transform="translate(0 3.500)" /><rect y="30" width="62" height="5" fill="#50504d" /><path d="M25 12h11M27 14h7" stroke="#999" stroke-width=".5" /></g>
            </g>

            <!-- product frames -->
            <g transform="translate(1243 629)">
                <text class="dots" y="-4">...</text><use href="#comp" x="24" y="-13" /><text class="name" x="38" y="-4">RB_P...</text>
                <g filter="url(#soft)"><use href="#mobBody" /><use href="#mobHead" /></g>
                <g transform="translate(23 0)" filter="url(#softer)"><use href="#deskHead" /><use href="#deskBody" /></g>
            </g>
            <g transform="translate(1353 629)">
                <text class="dots" y="-4">...</text><use href="#comp" x="24" y="-13" /><text class="name" x="38" y="-4">RB_P...</text>
                <g filter="url(#soft)"><use href="#mobExtra" y="47" /><use href="#mobBody" y="23" /><use href="#mobHead" /></g>
                <g transform="translate(23 0)" filter="url(#softer)"><use href="#deskHead" /><use href="#deskBody" /><use href="#panelForm" /><use href="#qtyRow" /></g>
            </g>
            <g transform="translate(1464 629)">
                <text class="dots" y="-4">...</text><use href="#comp" x="24" y="-13" /><text class="name" x="38" y="-4">RB_P...</text>
                <g filter="url(#soft)"><use href="#mobExtra" y="47" /><use href="#mobBody" y="23" /><use href="#mobHead" /></g>
                <g transform="translate(23 0)" filter="url(#softer)"><use href="#deskHead" /><use href="#deskBody" /><use href="#panelForm" /><use href="#qtyRow" /></g>
            </g>
            <g transform="translate(1574 629)">
                <text class="dots" y="-4">...</text><use href="#comp" x="24" y="-13" /><text class="name" x="38" y="-4">RB_P...</text>
                <g filter="url(#soft)"><use href="#mobExtra" y="47" /><use href="#mobBody" y="25" /><use href="#mobHead" /></g>
                <g transform="translate(23 0)" filter="url(#softer)"><use href="#deskHead" /><use href="#deskBody" /><use href="#panelForm" /><use href="#qtyRow" /></g>
            </g>
            <g transform="translate(1685 629)">
                <text class="dots" y="-4">...</text><use href="#comp" x="24" y="-13" /><text class="name" x="38" y="-4">RB_P...</text>
                <g filter="url(#soft)"><use href="#mobExtra" y="47" /><use href="#mobBody" y="43" /><use href="#mobHead" /></g>
                <g transform="translate(23 0)" filter="url(#softer)"><use href="#deskBody" y="11" /><use href="#deskHead" /><use href="#deskExtra" /><use href="#panelForm" /><use href="#qtyRow" /></g>
            </g>
            <g transform="translate(1795 629)">
                <text class="dots" y="-4">...</text><use href="#comp" x="24" y="-13" /><text class="name" x="38" y="-4">RB_P...</text>
                <g filter="url(#soft)"><use href="#mobExtra" y="47" /><use href="#mobBody" y="30" /><use href="#mobHead" /></g>
                <g transform="translate(23 0)" filter="url(#softer)"><use href="#deskHead" /><use href="#deskBody" /><use href="#panelForm" /><use href="#qtyRow" /></g>
            </g>
            <g transform="translate(1906 629)">
                <text class="dots" y="-4">...</text><use href="#comp" x="29" y="-16" /><text class="name" x="43" y="-7">RB_P...</text>
                <g filter="url(#soft)"><use href="#mobExtra" y="47" /><use href="#mobBody" y="25" /><use href="#mobHead" /></g>
                <g transform="translate(28 -3)" filter="url(#softer)"><use href="#deskHead" /><use href="#deskBody" /><use href="#qtyRow" /></g>
            </g>
            <g transform="translate(2016 629)">
                <text class="dots" y="-4">...</text><use href="#comp" x="24" y="-13" /><text class="name" x="38" y="-4">RB_P...</text>
                <g filter="url(#soft)"><use href="#mobExtra" y="47" /><use href="#mobBody" y="31" /><use href="#mobHead" /></g>
                <g transform="translate(23 0)" filter="url(#softer)"><use href="#deskHead" /><use href="#deskBody" /><use href="#panelRows" /></g>
            </g>
            <g transform="translate(2127 629)">
                <text class="dots" y="-4">...</text><use href="#comp" x="24" y="-13" /><text class="name" x="38" y="-4">RB_P...</text>
                <g filter="url(#soft)"><use href="#mobExtra" y="47" /><use href="#mobBody" y="30" /><use href="#mobHead" /></g>
                <g transform="translate(23 0)" filter="url(#softer)"><use href="#deskHead" /><use href="#deskBody" /><use href="#panelRows" /></g>
            </g>
            <g transform="translate(2238 629)">
                <text class="dots" y="-4">...</text><use href="#comp" x="23" y="-13" /><text class="name" x="37" y="-4">RB_P...</text>
                <g filter="url(#soft)"><use href="#mobExtra" y="47" /><use href="#mobBody" y="23" /><use href="#mobHead" /></g>
                <g transform="translate(22 0)" filter="url(#softer)"><use href="#deskHead" /><use href="#deskBody" /><use href="#panelForm" /></g>
            </g>
            <g transform="translate(2348 629)">
                <text class="dots" y="-4">...</text><use href="#comp" x="24" y="-13" /><text class="name" x="38" y="-4">RB_P...</text>
                <g transform="translate(0 1)" filter="url(#soft)"><use href="#cardMob" /></g>
                <g transform="translate(23 1)" filter="url(#soft)"><use href="#cardDesk" /></g>
            </g>
        </svg>

        <div class="welcome">
            <svg class="welcome-logo" viewBox="0 0 200 300"><use href="#figmaColor" /></svg>
            <p class="welcome-text"><strong>Welcome to Figma!</strong> Create an account to edit and collaborate on this file.</p>
            <div class="google-btn">
                <svg class="g-icon" viewBox="0 0 48 48">
                    <path fill="#EA4335" d="M24 9.500c3.540 0 6.710 1.220 9.210 3.600l6.850-6.850C35.900 2.380 30.470 0 24 0 14.620 0 6.510 5.380 2.560 13.220l7.980 6.190C12.430 13.720 17.740 9.500 24 9.500z" />
                    <path fill="#4285F4" d="M46.980 24.550c0-1.570-.15-3.090-.38-4.550H24v9.020h12.940c-.58 2.960-2.260 5.480-4.780 7.180l7.730 6c4.510-4.180 7.090-10.360 7.090-17.650z" />
                    <path fill="#FBBC05" d="M10.530 28.590c-.48-1.450-.76-2.990-.76-4.590s.27-3.140.76-4.590l-7.980-6.190C.92 16.460 0 20.120 0 24c0 3.880.92 7.540 2.560 10.780l7.970-6.190z" />
                    <path fill="#34A853" d="M24 48c6.480 0 11.930-2.130 15.890-5.810l-7.730-6c-2.150 1.450-4.920 2.300-8.160 2.300-6.260 0-11.570-4.220-13.470-9.910l-7.980 6.190C6.510 42.620 14.620 48 24 48z" />
                </svg>
                <span>Continue with Google</span>
            </div>
            <div class="email-btn">Sign up with email</div>
        </div>
    </div>
</body>

</html>
```

FILE: styles.css
```css
* {
    margin: 0;
    padding: 0;
    box-sizing: border-box;
}

body {
    width: 2542px;
    height: 1347px;
    overflow: hidden;
    display: flex;
    flex-direction: column;
    background: #a51c1e;
    font-family: Roboto, "Liberation Sans", sans-serif;
}

.sprites {
    position: absolute;
}

/* browser tabs, only their colored group lines show */
.tabstrip {
    height: 6px;
    flex: none;
    display: flex;
    align-items: flex-end;
    gap: 21px;
    padding-left: 191px;
    background: #6b1010;
}

.tabline {
    height: 2px;
    border-radius: 2px 2px 0 0;
}

.t-purple { width: 201px; background: #c27ae0; }
.t-pink { width: 203px; background: #f472a8; }
.t-green { width: 209px; background: #7cc98a; }
.t-yellow { width: 210px; background: #fdd663; }
.t-salmon { width: 201px; background: #e8766e; }
.t-blue { width: 198px; background: #8ab4f8; }
.t-grey { width: 378px; background: #dadce0; }

.active-tab {
    width: 180px;
    height: 6px;
    margin-left: 165px;
    background: #a51c1e;
    clip-path: polygon(2px 0, 178px 0, 180px 100%, 0 100%);
}

/* address bar row */
.toolbar {
    height: 32px;
    flex: none;
    display: flex;
    align-items: center;
    padding-top: 4px;
}

.nav-btns {
    width: 134px;
    display: flex;
    gap: 16px;
    padding-left: 8px;
}

.nav-icon {
    width: 16px;
    height: 16px;
}

.dim-stroke {
    fill: none;
    stroke: #d47f7f;
    stroke-width: 1.6;
}

.white-stroke {
    fill: none;
    stroke: #fff;
    stroke-width: 1.6;
}

.omnibox {
    width: 2099px;
    height: 28px;
    display: flex;
    align-items: center;
    border-radius: 14px;
    background: #801d1d;
    padding: 0 9px 0 13px;
}

.lock {
    width: 10px;
    height: 12px;
    margin-right: 11px;
}

.url {
    flex: 1;
    font-size: 13.9px;
    color: #d9b9b9;
}

.host {
    color: #fff;
}

.omni-icon {
    width: 16px;
    height: 16px;
    margin-left: 16px;
}

.extensions {
    flex: 1;
    display: flex;
    align-items: center;
    gap: 16px;
    padding-left: 14px;
}

.ext {
    width: 16px;
    height: 18px;
}

.abp {
    font-size: 6px;
    font-weight: 700;
    fill: #fff;
    text-anchor: middle;
}

.profile {
    width: 80px;
    height: 28px;
    flex: none;
    display: flex;
    align-items: center;
    gap: 7px;
    margin-left: -5px;
    border: 1px solid #e2b4b4;
    border-radius: 14px;
    background: #b5302f;
}

.avatar {
    width: 24px;
    height: 24px;
    margin-left: 0;
}

.paused {
    font-size: 12.5px;
    color: #f1dcdc;
}

.kebab {
    width: 4px;
    height: 16px;
    flex: none;
    margin-left: 0;
    fill: #fff;
}

/* bookmarks bar */
.bookmarks {
    height: 37px;
    flex: none;
    display: flex;
    align-items: center;
    padding-left: 9px;
    border-bottom: 1px solid #c44444;
}

.bm {
    display: flex;
    align-items: center;
    gap: 9px;
    flex: none;
    font-size: 12.4px;
    line-height: 16px;
    margin-top: -1px;
    color: #fff;
    white-space: nowrap;
}

.bm-icon {
    width: 14px;
    height: 15px;
    flex: none;
}

.fold {
    width: 12px;
    height: 13px;
}

.tall {
    width: 16px;
    height: 18px;
}

.narrow {
    width: 11px;
    height: 16px;
}

/* every item keeps the slot it has in the bar */
.w-inbox { width: 143px; }
.w-cal { width: 128px; }
.w-docs { width: 109px; }
.w-icloud { width: 110px; }
.w-jira { width: 64px; }
.w-bit { width: 89px; }
.w-store { width: 99px; }
.w-sales { width: 94px; }
.w-coding { width: 138px; }
.w-conf { width: 99px; }
.w-drive { width: 146px; }
.w-web { width: 153px; }
.w-fill { width: 87px; }
.w-sheets { width: 112px; }
.w-rb { width: 148px; }
.w-ben { width: 86px; }
.w-figpea { width: 151px; }
.w-staging { width: 149px; }
.w-json { width: 140px; }

.json-mark {
    font-size: 4.5px;
    fill: #fff;
    text-anchor: middle;
}

.cal-num {
    font-size: 9px;
    font-weight: 700;
    fill: #1a73e8;
    text-anchor: middle;
}

/* figma's own header */
.figma-bar {
    height: 48px;
    flex: none;
    position: relative;
    display: flex;
    align-items: center;
    justify-content: space-between;
    background: #2c2c2c;
    font-family: Inter, Roboto, sans-serif;
    color: #fff;
}

.bar-left {
    display: flex;
    align-items: center;
    height: 100%;
    padding-left: 9px;
}

.menu-logo {
    width: 10px;
    height: 15px;
}

.chev {
    width: 8px;
    height: 5px;
    fill: none;
    stroke: #e0e0e0;
    stroke-width: 1;
}

.bar-left .chev {
    margin-left: 7px;
}

.hand-btn {
    width: 40px;
    height: 100%;
    display: flex;
    align-items: center;
    justify-content: center;
    margin-left: 12px;
    background: #0d99ff;
}

.hand {
    width: 18px;
    height: 21px;
    fill: none;
    stroke: #fff;
    stroke-width: 1;
}

.doc-title {
    position: absolute;
    left: 1253px;
    font-size: 14px;
    font-weight: 500;
}

.bar-right {
    display: flex;
    align-items: center;
    padding-right: 4px;
}

.user-dot {
    width: 24px;
    height: 24px;
    display: flex;
    align-items: center;
    justify-content: center;
    border-radius: 50%;
    background: #667aa3;
    font-size: 11px;
    font-weight: 500;
}

.login-btn {
    width: 56px;
    height: 32px;
    display: flex;
    align-items: center;
    justify-content: center;
    margin-left: 12px;
    border: 1px solid #444;
    border-radius: 6px;
    font-size: 11.5px;
    font-weight: 600;
}

.play {
    width: 9px;
    height: 13px;
    margin-left: 28px;
    fill: none;
    stroke: #fff;
    stroke-width: 1;
}

.zoom-level {
    margin-left: 38px;
    font-size: 11px;
}

.zoom-level + .chev {
    margin-left: 4px;
}

/* the canvas */
.canvas {
    flex: 1;
    position: relative;
    background: #e5e5e5;
}

.board {
    display: block;
}

.dots {
    font-family: Inter, sans-serif;
    font-size: 11px;
    fill: #9747ff;
}

.name {
    font-family: Inter, sans-serif;
    font-size: 11px;
    fill: #9747ff;
    opacity: .85;
}

.welcome {
    position: absolute;
    left: 830px;
    top: 22px;
    width: 888px;
    height: 72px;
    display: flex;
    align-items: center;
    padding: 0 20px;
    border-radius: 3px;
    background: #fff;
    box-shadow: 0 2px 14px rgba(0, 0, 0, 0.25);
    font-family: Inter, sans-serif;
}

.welcome-logo {
    width: 20px;
    height: 30px;
    flex: none;
}

.welcome-text {
    width: 505px;
    flex: none;
    margin-left: 32px;
    margin-top: -1px;
    font-size: 14px;
    letter-spacing: .05px;
    color: #444;
    white-space: nowrap;
}

.welcome-text strong {
    font-weight: 600;
    letter-spacing: 0;
    color: #222;
}

.google-btn {
    width: 161px;
    height: 32px;
    flex: none;
    display: flex;
    align-items: center;
    gap: 10px;
    padding-left: 12px;
    border: 1px solid #333;
    border-radius: 6px;
    font-size: 11px;
    color: #555;
    white-space: nowrap;
}

.g-icon {
    width: 14px;
    height: 14px;
    flex: none;
}

.email-btn {
    width: 118px;
    height: 32px;
    flex: none;
    display: flex;
    align-items: center;
    justify-content: center;
    margin-left: 12px;
    border-radius: 6px;
    background: #14ae5c;
    font-size: 11px;
    font-weight: 600;
    color: #fff;
    white-space: nowrap;
}
```
